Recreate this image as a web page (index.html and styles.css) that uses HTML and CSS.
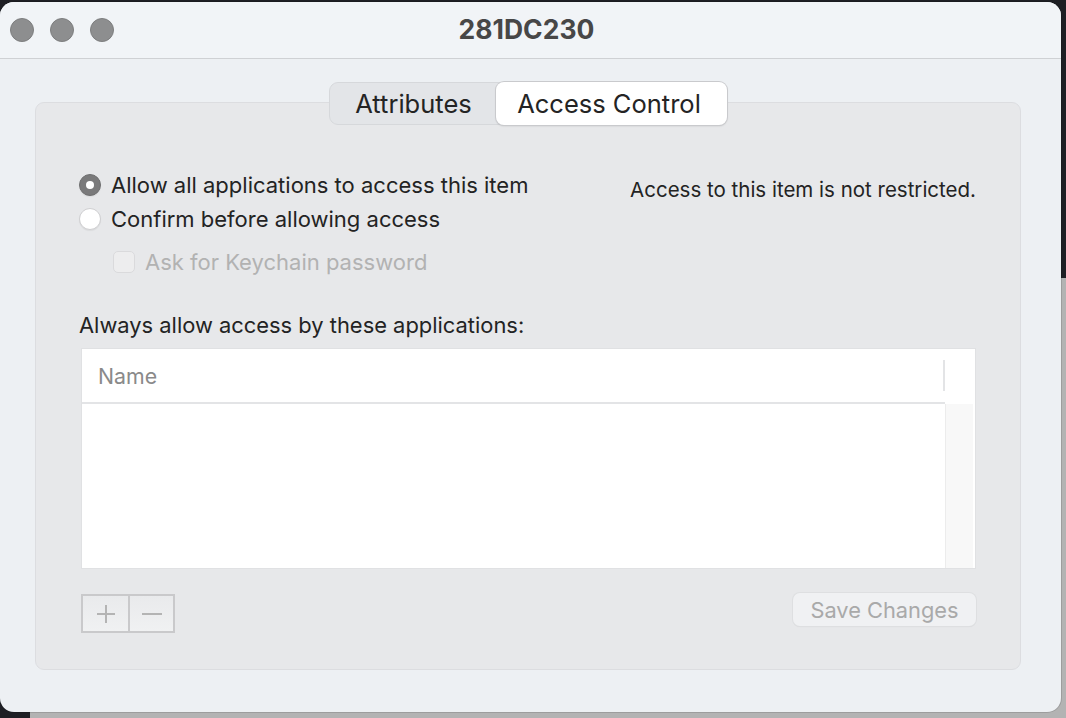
FILE: index.html
```html
<!DOCTYPE html>
<html>
<head>
<meta charset="utf-8">
<link rel="stylesheet" href="styles.css">
</head>
<body>
<div class="desktop">
  <div class="backdrop-top"></div>
  <div class="backdrop-corner"></div>
  <div class="window">
    <div class="titlebar">
      <div class="lights">
        <span class="light"></span><span class="light"></span><span class="light"></span>
      </div>
      <div class="title">281DC230</div>
    </div>
    <div class="content">
      <div class="tabs">
        <div class="tab">Attributes</div>
        <div class="tab active">Access Control</div>
      </div>
      <div class="group">
        <div class="top-row">
          <div class="options">
            <label class="option"><span class="radio checked"></span>Allow all applications to access this item</label>
            <label class="option"><span class="radio"></span>Confirm before allowing access</label>
            <label class="option sub disabled"><span class="checkbox"></span>Ask for Keychain password</label>
          </div>
          <div class="status">Access to this item is not restricted.</div>
        </div>
        <div class="list-label">Always allow access by these applications:</div>
        <div class="table">
          <div class="thead">
            <div class="th">Name</div>
            <div class="th-end"></div>
          </div>
          <div class="tbody">
            <div class="rows"></div>
            <div class="scroll"></div>
          </div>
        </div>
        <div class="bottom-row">
          <div class="pm">
            <button class="pm-btn"><svg width="22" height="22" viewBox="0 0 22 22"><path d="M11 2v18M2 11h18" stroke="#b4b4b4" stroke-width="2" fill="none"/></svg></button>
            <button class="pm-btn"><svg width="22" height="22" viewBox="0 0 22 22"><path d="M1 11h20" stroke="#b4b4b4" stroke-width="2" fill="none"/></svg></button>
          </div>
          <button class="save">Save Changes</button>
        </div>
      </div>
    </div>
  </div>
</div>
</body>
</html>
```
FILE: styles.css
```css
* { box-sizing: border-box; }
html, body { margin: 0; padding: 0; }
body {
  width: 1066px;
  height: 718px;
  overflow: hidden;
  background: #b3b3b3;
  font-family: Inter, "Liberation Sans", sans-serif;
  color: #242424;
}
.desktop {
  position: relative;
  width: 1066px;
  height: 718px;
  padding-top: 2px;
}
.backdrop-top {
  position: absolute;
  left: 0; top: 0;
  width: 1066px; height: 278px;
  background: #1e1f24;
}
.backdrop-corner {
  position: absolute;
  left: 0; top: 600px;
  width: 30px; height: 118px;
  background: #1e1f24;
}
.window {
  position: relative;
  width: 1061px;
  height: 710px;
  border-radius: 14px;
  background: #edf0f3;
  overflow: hidden;
  display: flex;
  flex-direction: column;
  box-shadow: 0 0 0 1px rgba(0,0,0,0.12);
}
.titlebar {
  height: 57px;
  flex: none;
  background: #f1f4f7;
  border-bottom: 1px solid #cfd1d4;
  display: flex;
  align-items: center;
  position: relative;
}
.lights {
  display: flex;
  gap: 16px;
  padding-left: 10px;
}
.light {
  width: 24px; height: 24px;
  border-radius: 50%;
  background: #8d8e8f;
  border: 1px solid #7d7e7f;
}
.title {
  position: absolute;
  left: 0; right: 0; top: 0; bottom: 0;
  display: flex;
  align-items: center;
  justify-content: center;
  font-weight: 700;
  font-size: 26.5px;
  color: #474747;
  padding-right: 8px;
  padding-bottom: 2px;
}
.content {
  flex: 1;
  padding: 23px 40px 42px 35px;
  display: flex;
  flex-direction: column;
}
.tabs {
  align-self: center;
  display: flex;
  height: 43px;
  margin-bottom: -23px;
  margin-left: -1px;
  position: relative;
  z-index: 2;
  background: #e3e5e8;
  border: 1px solid #d6d8db;
  border-radius: 9px;
}
.tab {
  display: flex;
  align-items: center;
  justify-content: center;
  font-size: 25.5px;
  padding: 0 0 0 2px;
  color: #242424;
  width: 166px;
}
.tab.active {
  width: 231px;
  background: #fff;
  border-radius: 8px;
  margin: -1px -1px -1px 0;
  padding: 0 4px 0 0;
  box-shadow: 0 0 0 1px #c9cacd, 0 1px 2px rgba(0,0,0,0.18);
}
.group {
  flex: 1;
  background: #e7e8ea;
  border: 1px solid #dcdde0;
  border-radius: 9px;
  padding: 65px 44px 0 43px;
  display: flex;
  flex-direction: column;
}
.top-row {
  display: flex;
  justify-content: space-between;
  align-items: flex-start;
}
.options {
  display: flex;
  flex-direction: column;
}
.option {
  display: flex;
  align-items: center;
  height: 34px;
  font-size: 22px;
  color: #232323;
}
.option.sub {
  margin-top: 9px;
  padding-left: 34px;
}
.option.disabled { color: #b2b2b2; }
.radio {
  width: 22px; height: 22px;
  border-radius: 50%;
  background: #fff;
  border: 1px solid #cfcfd1;
  margin-right: 10px;
  flex: none;
  box-shadow: 0 1px 1px rgba(0,0,0,0.06);
}
.radio.checked {
  background: #7a7a7b;
  border-color: #6f6f70;
  display: flex;
  align-items: center;
  justify-content: center;
}
.radio.checked::after {
  content: "";
  width: 8px; height: 8px;
  border-radius: 50%;
  background: #fff;
}
.checkbox {
  width: 22px; height: 22px;
  border-radius: 5px;
  background: #ededee;
  border: 1px solid #dadadc;
  margin-right: 10px;
  flex: none;
}
.status {
  font-size: 20.5px;
  margin-top: 9px;
  color: #232323;
}
.list-label {
  margin-top: 29px;
  height: 34px;
  display: flex;
  align-items: center;
  font-size: 21.9px;
  color: #232323;
}
.table {
  margin: 6px 0 0 2px;
  height: 221px;
  background: #fff;
  border: 1px solid #e0e1e3;
  display: flex;
  flex-direction: column;
}
.thead {
  height: 55px;
  display: flex;
  align-items: center;
  border-bottom: 2px solid #e3e4e6;
  margin-right: 30px;
}
.th {
  flex: 1;
  padding-left: 16px;
  font-size: 21.3px;
  color: #8a8a8a;
  border-right: 2px solid #e3e4e6;
  height: 31px;
  display: flex;
  align-items: center;
}
.th-end { width: 0; }
.tbody {
  flex: 1;
  display: flex;
}
.rows { flex: 1; }
.scroll {
  width: 28px;
  margin-left: 2px;
  margin-right: 2px;
  background: #f8f8f8;
  border-left: 1px solid #ececec;
}
.bottom-row {
  display: flex;
  justify-content: space-between;
  align-items: flex-start;
  margin-top: 25px;
  padding-left: 2px;
}
.pm {
  display: flex;
  border: 2px solid #c9c9cb;
  background: linear-gradient(#e9eaec, #f0f1f2);
}
.pm-btn {
  width: 45px;
  height: 35px;
  border: none;
  background: transparent;
  padding: 0;
  display: flex;
  align-items: center;
  justify-content: center;
}
.pm-btn + .pm-btn { border-left: 2px solid #c9c9cb; }
.save {
  margin-top: -1px;
  width: 183px;
  height: 33px;
  border: none;
  border-radius: 7px;
  background: #f0f1f3;
  box-shadow: 0 0 0 1px #dedfe1, 0 1px 1px rgba(0,0,0,0.08);
  font-family: inherit;
  font-size: 21.8px;
  color: #a9a9a9;
  padding: 0;
}
```
